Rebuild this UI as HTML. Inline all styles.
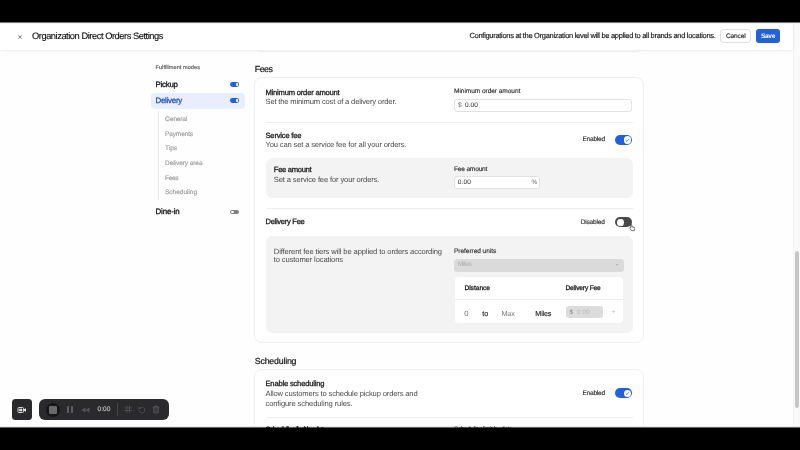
<!DOCTYPE html>
<html><head><meta charset="utf-8"><title>Organization Direct Orders Settings</title>
<style>
*{box-sizing:border-box;margin:0;padding:0}
html,body{width:800px;height:450px;overflow:hidden;background:#000;font-family:"Liberation Sans",sans-serif;color:#1a1a1a}
#app{position:absolute;left:0;top:0;width:800px;height:450px;overflow:hidden;will-change:transform}
#bg{position:absolute;left:0;top:22px;width:800px;height:405.5px;background:#fefefe}
.a{position:absolute}
.x{position:absolute;white-space:nowrap;line-height:normal;text-rendering:geometricPrecision}
.card{position:absolute;left:254.3px;width:389.3px;border:1px solid #f0f0f0;border-radius:8px;background:#fff}
.gb{position:absolute;left:265.5px;width:367px;border-radius:6px;background:#f3f3f3}
.hr{position:absolute;left:266px;width:367px;height:1px;background:#efefef}
.inp{position:absolute;border:1px solid #e2e2e2;border-radius:3px;background:#fff}
.tog{position:absolute;left:615.3px;width:17.1px;height:10.1px;border-radius:5.05px;background:#2161de}
.tog i{position:absolute;right:1.4px;top:1.4px;width:7.3px;height:7.3px;border-radius:50%;background:#fff}
.tog svg{position:absolute;right:2.7px;top:2.7px;width:4.7px;height:4.7px}
.stog{position:absolute;left:230.3px;width:8.9px;height:4.8px;border-radius:2.4px;background:#2260dd}
.stog i{position:absolute;right:1.1px;top:1.1px;width:2.6px;height:2.6px;border-radius:50%;background:#fff}

</style></head><body>
<div id="app">
<div id="bg"></div>
<div class="a" style="left:793px;top:22px;width:7px;height:405.5px;background:#fafafa;border-left:1px solid #f3f3f3"></div>
<div class="a" style="left:795px;top:251px;width:3.8px;height:156.7px;border-radius:2px;background:#c6c6c6"></div>
<div class="card" style="top:30px;height:21.5px;border-color:#f3f3f3"></div>
<div class="card" style="top:77px;height:266px"></div>
<div class="card" style="top:368.9px;height:90px"></div>
<div class="a" style="left:0;top:22px;width:793px;height:27.5px;background:#fff;box-shadow:0 .5px 3px rgba(0,0,0,.09)"></div>
<div class="a" style="left:720.4px;top:29.4px;width:30.2px;height:13.2px;border:1px solid #e0e0e0;border-radius:3px;background:#fff"></div>
<div class="a" style="left:755.6px;top:29.4px;width:24.4px;height:13.2px;border-radius:3px;background:#2260dd"></div>
<div class="stog" style="top:82px"><i></i></div>
<div class="a" style="left:150.8px;top:92.6px;width:93.8px;height:16px;border-radius:4px;background:#e8eefb"></div>
<div class="stog" style="top:98.3px"><i></i></div>
<div class="a" style="left:157.6px;top:111px;width:1.2px;height:88.5px;background:#e6e6e6"></div>
<div class="stog" style="top:209.5px;background:#808080"><i style="right:auto;left:1.1px"></i></div>
<div class="inp" style="left:454.4px;top:98.8px;width:178px;height:13.2px"></div>
<div class="hr" style="top:122px"></div>
<div class="tog" style="top:134.9px"><i></i><svg viewBox="0 0 10 10"><path d="M2 5.2 L4.2 7.3 L8 3" fill="none" stroke="#2260dd" stroke-width="1.6" stroke-linecap="round" stroke-linejoin="round"/></svg></div>
<div class="gb" style="top:157.5px;height:40.5px"></div>
<div class="inp" style="left:454.4px;top:176.2px;width:86px;height:13.2px"></div>
<div class="hr" style="top:208px"></div>
<div class="tog" style="top:217.4px;background:#4a4a4a"><i style="right:auto;left:1.7px;top:1.7px;width:6.7px;height:6.7px"></i></div>
<div class="gb" style="top:236.2px;height:96.5px"></div>
<div class="a" style="left:454.4px;top:259px;width:169.3px;height:12.5px;border-radius:3px;background:#dadada"></div>
<div class="a" style="left:615.5px;top:264.3px;width:0;height:0;border-left:1.6px solid transparent;border-right:1.6px solid transparent;border-top:2px solid #aaa"></div>
<div class="a" style="left:455px;top:276.7px;width:168.2px;height:46.6px;border-radius:4px;background:#fff"></div>
<div class="a" style="left:455px;top:299px;width:168.2px;height:1px;background:#efefef"></div>
<div class="a" style="left:566.2px;top:306.1px;width:36.5px;height:12.4px;border-radius:3px;background:#dcdcdc"></div>
<svg class="a" style="left:628.6px;top:224.3px;width:6.6px;height:7.3px" viewBox="0 0 20 22"><path d="M7 1.5c1 0 1.8.8 1.8 1.8v5.2l6.5 1.2c1.5.3 2.5 1.6 2.3 3.1l-.8 5.2c-.2 1.3-1.300 2.300-2.600 2.300H9.500c-.9 0-1.700-.4-2.200-1.100L2.600 12.800c-.5-.7-.3-1.700.4-2.200.7-.5 1.600-.4 2.200.2l.1.100V3.300C5.300 2.300 6 1.500 7 1.500z" fill="#fff" stroke="#333" stroke-width="2.2"/></svg>
<div class="tog" style="top:388.3px"><i></i><svg viewBox="0 0 10 10"><path d="M2 5.2 L4.2 7.3 L8 3" fill="none" stroke="#2260dd" stroke-width="1.6" stroke-linecap="round" stroke-linejoin="round"/></svg></div>
<div class="hr" style="top:416.7px"></div>
<div class="a" style="left:12px;top:399.3px;width:20px;height:20.4px;border-radius:3.5px;background:#2a2a2d"></div>
<svg class="a" style="left:17px;top:405.5px;width:10px;height:8px" viewBox="0 0 20 16"><rect x="2" y="3" width="11" height="10" rx="2" fill="none" stroke="#e8e8e8" stroke-width="1.8"/><rect x="4.500" y="5.500" width="6" height="5" fill="#e8e8e8"/><path d="M14 6.500 L18 4.500 V11.500 L14 9.500 Z" fill="#e8e8e8"/></svg>
<div class="a" style="left:39.300px;top:398.8px;width:129.5px;height:21.4px;border-radius:6px;background:#2a2a2d"></div>
<div class="a" style="left:46.300px;top:402.5px;width:14px;height:14px;border-radius:50%;background:#161618"></div>
<div class="a" style="left:49.300px;top:405.5px;width:8.2px;height:8.2px;border-radius:1px;background:#6a6a6d"></div>
<div class="a" style="left:66.800px;top:405.7px;width:2.3px;height:7.6px;border-radius:.6px;background:#5f5f63"></div>
<div class="a" style="left:70.600px;top:405.7px;width:2.3px;height:7.6px;border-radius:.6px;background:#5f5f63"></div>
<svg class="a" style="left:81px;top:406.5px;width:9px;height:6px" viewBox="0 0 18 12"><path d="M9 1 V11 L1 6 Z M17 1 V11 L9 6 Z" fill="#55555a"/></svg>
<div class="a" style="left:117.300px;top:403px;width:.8px;height:13px;background:#434347"></div>
<svg class="a" style="left:124px;top:405.3px;width:8.4px;height:8.4px" viewBox="0 0 16 16"><path d="M5.500 1 V15 M10.500 1 V15 M1 5.500 H15 M1 10.500 H15" stroke="#55555a" stroke-width="1.4" fill="none"/></svg>
<svg class="a" style="left:138px;top:405.5px;width:8px;height:8px" viewBox="0 0 16 16"><path d="M4 4.500 A5.500 5.500 0 1 1 2.500 8" stroke="#55555a" stroke-width="1.6" fill="none"/><path d="M1.500 1.500 L2 6.500 L6.500 5 Z" fill="#55555a"/></svg>
<svg class="a" style="left:151.500px;top:405px;width:8px;height:9px" viewBox="0 0 16 18"><path d="M1.500 4 H14.500 M5.500 4 V2 H10.500 V4 M3 4 L3.800 16 H12.200 L13 4" stroke="#55555a" stroke-width="1.6" fill="#3c3c40"/></svg>
<div class="a" style="left:0;top:426px;width:800px;height:24px;background:linear-gradient(#e8e8e8 0,#e8e8e8 1px,#666 1px,#666 2px,#000 2px)"></div>
<div class="a" style="left:0;top:0;width:800px;height:24px;background:linear-gradient(#000 0,#000 22px,#777 22px,#777 23px,#f2f2f2 23px)"></div>
<span class="x" style="left:17.50px;top:31.91px;font-size:8.50px;color:#555;letter-spacing:0.031px">×</span>
<span class="x" style="left:32.00px;top:30.98px;font-size:9.30px;color:#111;letter-spacing:-0.450px;-webkit-text-stroke:.14px #111">Organization Direct Orders Settings</span>
<span class="x" style="left:469.50px;top:31.31px;font-size:7.50px;color:#111;letter-spacing:-0.304px;-webkit-text-stroke:.14px #111">Configurations at the Organization level will be applied to all brands and locations.</span>
<span class="x" style="left:726.00px;top:32.63px;font-size:6.60px;color:#222;letter-spacing:-0.172px;-webkit-text-stroke:.14px #222">Cancel</span>
<span class="x" style="left:761.00px;top:32.63px;font-size:6.60px;color:#fff;letter-spacing:-0.352px;font-weight:700">Save</span>
<span class="x" style="left:155.50px;top:64.93px;font-size:5.60px;color:#666;letter-spacing:0.039px;-webkit-text-stroke:.2px #666">Fulfillment modes</span>
<span class="x" style="left:155.50px;top:79.65px;font-size:7.90px;color:#111;letter-spacing:-0.248px;-webkit-text-stroke:.3px #111">Pickup</span>
<span class="x" style="left:155.50px;top:96.15px;font-size:7.90px;color:#2053c4;letter-spacing:-0.250px;-webkit-text-stroke:.3px #2053c4">Delivery</span>
<span class="x" style="left:165.00px;top:115.63px;font-size:6.60px;color:#9b9b9b;letter-spacing:-0.210px;-webkit-text-stroke:.14px #9b9b9b">General</span>
<span class="x" style="left:165.00px;top:130.63px;font-size:6.60px;color:#9b9b9b;letter-spacing:-0.166px;-webkit-text-stroke:.14px #9b9b9b">Payments</span>
<span class="x" style="left:165.00px;top:145.23px;font-size:6.60px;color:#9b9b9b;letter-spacing:-0.055px;-webkit-text-stroke:.14px #9b9b9b">Tips</span>
<span class="x" style="left:165.00px;top:160.03px;font-size:6.60px;color:#9b9b9b;letter-spacing:-0.105px;-webkit-text-stroke:.14px #9b9b9b">Delivery area</span>
<span class="x" style="left:165.00px;top:174.63px;font-size:6.60px;color:#9b9b9b;letter-spacing:-0.343px;-webkit-text-stroke:.14px #9b9b9b">Fees</span>
<span class="x" style="left:165.00px;top:189.03px;font-size:6.60px;color:#9b9b9b;letter-spacing:-0.064px;-webkit-text-stroke:.14px #9b9b9b">Scheduling</span>
<span class="x" style="left:155.50px;top:207.25px;font-size:7.90px;color:#111;letter-spacing:-0.143px;-webkit-text-stroke:.3px #111">Dine-in</span>
<span class="x" style="left:254.80px;top:64.04px;font-size:8.80px;color:#111;letter-spacing:-0.516px;-webkit-text-stroke:.2px #111">Fees</span>
<span class="x" style="left:265.50px;top:87.62px;font-size:7.60px;color:#1c1c1c;letter-spacing:-0.204px;-webkit-text-stroke:.3px #1c1c1c">Minimum order amount</span>
<span class="x" style="left:265.50px;top:97.42px;font-size:7.60px;color:#4a4a4a;letter-spacing:-0.166px">Set the minimum cost of a delivery order.</span>
<span class="x" style="left:265.50px;top:130.62px;font-size:7.60px;color:#1c1c1c;letter-spacing:-0.200px;-webkit-text-stroke:.3px #1c1c1c">Service fee</span>
<span class="x" style="left:265.50px;top:140.32px;font-size:7.60px;color:#4a4a4a;letter-spacing:-0.154px">You can set a service fee for all your orders.</span>
<span class="x" style="left:273.80px;top:165.42px;font-size:7.60px;color:#1c1c1c;letter-spacing:-0.303px;-webkit-text-stroke:.3px #1c1c1c">Fee amount</span>
<span class="x" style="left:273.80px;top:175.42px;font-size:7.60px;color:#4a4a4a;letter-spacing:-0.137px">Set a service fee for your orders.</span>
<span class="x" style="left:265.50px;top:217.42px;font-size:7.60px;color:#1c1c1c;letter-spacing:-0.302px;-webkit-text-stroke:.3px #1c1c1c">Delivery Fee</span>
<span class="x" style="left:273.80px;top:246.72px;font-size:7.60px;color:#4a4a4a;letter-spacing:-0.117px">Different fee tiers will be applied to orders according</span>
<span class="x" style="left:273.80px;top:255.02px;font-size:7.60px;color:#4a4a4a;letter-spacing:-0.122px">to customer locations</span>
<span class="x" style="left:454.00px;top:87.83px;font-size:6.60px;color:#2e2e2e;letter-spacing:-0.075px;-webkit-text-stroke:.14px #2e2e2e">Minimum order amount</span>
<span class="x" style="left:458.00px;top:101.63px;font-size:6.60px;color:#666;letter-spacing:-0.172px">$</span>
<span class="x" style="left:465.00px;top:101.63px;font-size:6.60px;color:#222;letter-spacing:0.039px">0.00</span>
<span class="x" style="left:582.50px;top:136.43px;font-size:6.60px;color:#2e2e2e;letter-spacing:-0.272px;-webkit-text-stroke:.14px #2e2e2e">Enabled</span>
<span class="x" style="left:454.00px;top:165.83px;font-size:6.60px;color:#2e2e2e;letter-spacing:-0.199px;-webkit-text-stroke:.14px #2e2e2e">Fee amount</span>
<span class="x" style="left:457.80px;top:179.23px;font-size:6.60px;color:#222;letter-spacing:0.089px">0.00</span>
<span class="x" style="left:531.60px;top:179.32px;font-size:6.50px;color:#666;letter-spacing:0.019px">%</span>
<span class="x" style="left:580.70px;top:219.13px;font-size:6.60px;color:#2e2e2e;letter-spacing:-0.196px;-webkit-text-stroke:.14px #2e2e2e">Disabled</span>
<span class="x" style="left:454.00px;top:248.03px;font-size:6.60px;color:#2e2e2e;letter-spacing:-0.070px;-webkit-text-stroke:.14px #2e2e2e">Preferred units</span>
<span class="x" style="left:457.80px;top:261.43px;font-size:6.60px;color:#adadad;letter-spacing:-0.338px">Miles</span>
<span class="x" style="left:464.40px;top:284.63px;font-size:6.60px;color:#1c1c1c;letter-spacing:-0.007px;-webkit-text-stroke:.3px #1c1c1c">Distance</span>
<span class="x" style="left:565.50px;top:284.63px;font-size:6.60px;color:#1c1c1c;letter-spacing:-0.160px;-webkit-text-stroke:.3px #1c1c1c">Delivery Fee</span>
<span class="x" style="left:464.30px;top:309.03px;font-size:7.70px;color:#777;letter-spacing:0.219px">0</span>
<span class="x" style="left:482.30px;top:309.48px;font-size:7.20px;color:#222;letter-spacing:0.000px;-webkit-text-stroke:.14px #222">to</span>
<span class="x" style="left:501.40px;top:309.48px;font-size:7.20px;color:#777;letter-spacing:-0.065px">Max</span>
<span class="x" style="left:535.30px;top:309.48px;font-size:7.20px;color:#222;letter-spacing:-0.156px;-webkit-text-stroke:.14px #222">Miles</span>
<span class="x" style="left:569.50px;top:308.81px;font-size:6.40px;color:#888;letter-spacing:-0.562px">$</span>
<span class="x" style="left:577.00px;top:308.81px;font-size:6.40px;color:#b8b8b8;letter-spacing:0.137px">0.00</span>
<span class="x" style="left:611.50px;top:309.12px;font-size:6.50px;color:#bbb;letter-spacing:-0.297px">+</span>
<span class="x" style="left:254.80px;top:356.04px;font-size:8.80px;color:#111;letter-spacing:-0.203px;-webkit-text-stroke:.2px #111">Scheduling</span>
<span class="x" style="left:265.50px;top:379.42px;font-size:7.60px;color:#1c1c1c;letter-spacing:-0.193px;-webkit-text-stroke:.3px #1c1c1c">Enable scheduling</span>
<span class="x" style="left:265.50px;top:389.42px;font-size:7.60px;color:#4a4a4a;letter-spacing:-0.149px">Allow customers to schedule pickup orders and</span>
<span class="x" style="left:265.50px;top:398.52px;font-size:7.60px;color:#4a4a4a;letter-spacing:-0.124px">configure scheduling rules.</span>
<span class="x" style="left:582.50px;top:389.83px;font-size:6.60px;color:#2e2e2e;letter-spacing:-0.272px;-webkit-text-stroke:.14px #2e2e2e">Enabled</span>
<span class="x" style="left:265.50px;top:425.12px;font-size:7.60px;color:#000;letter-spacing:-0.821px;-webkit-text-stroke:.3px #000">Scheduling limit by date</span>
<span class="x" style="left:454.00px;top:426.03px;font-size:6.60px;color:#000;letter-spacing:-0.485px">Scheduling limit by date</span>
<span class="x" style="left:97.50px;top:405.83px;font-size:6.60px;color:#c0c0c0;letter-spacing:0.039px;-webkit-text-stroke:.14px #c0c0c0">0:00</span>
</div></body></html>
